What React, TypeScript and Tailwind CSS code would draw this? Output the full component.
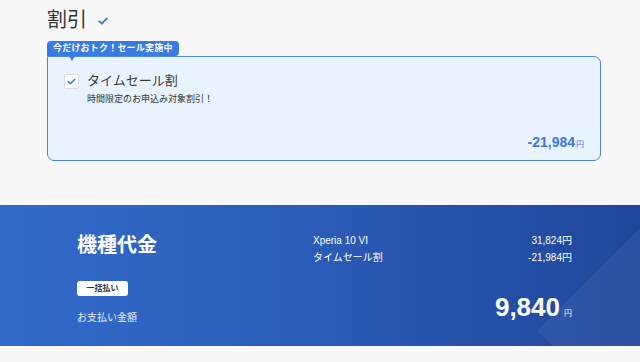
import React from "react";

const font = { fontFamily: '"Liberation Sans", "Noto Sans CJK JP", sans-serif' };

function Check({ className }: { className?: string }) {
  return (
    <svg viewBox="0 0 10 8" className={className} fill="none">
      <polyline points="1.2,4.2 3.8,6.6 8.8,1.4" stroke="currentColor" strokeWidth="1.8" strokeLinecap="round" strokeLinejoin="round" />
    </svg>
  );
}

export default function App() {
  return (
    <div className="w-[640px] h-[362px] bg-[#f8f8f8] overflow-hidden text-[#333]" style={font}>
      <div className="pl-[47px] pt-[6px]">
        <div className="flex items-center gap-[11px] h-[28px]">
          <span className="text-[20px] leading-[28px] text-[#333]">割引</span>
          <Check className="w-[10px] h-[8px] text-[#3b78dd] mt-[1px]" />
        </div>
        <div className="relative mt-[22px] w-[554px]">
          <div className="absolute left-0 -top-[15px] h-[15px] px-[6px] bg-[#3b7ae0] rounded-t-[4px] rounded-br-[4px] flex items-center">
            <span className="text-[9px] font-bold text-white leading-none tracking-[0.2px]">今だけおトク！セール実施中</span>
            <span className="absolute left-[22px] top-[15px] w-0 h-0 border-l-[3px] border-r-[3px] border-t-[5px] border-l-transparent border-r-transparent border-t-[#3b7ae0]" />
          </div>
          <div className="h-[105px] border-[1.5px] border-[#4a88ea] bg-[#e9f3fd] rounded-[7px] rounded-tl-none px-[16px] pt-[16px] flex flex-col">
            <div className="flex items-center gap-[8px]">
              <div className="w-[15px] h-[15px] bg-white border border-[#d5dbe3] rounded-[2px] flex items-center justify-center">
                <Check className="w-[9px] h-[7px] text-[#3b78dd]" />
              </div>
              <span className="text-[13px] leading-[16px] text-[#3a3a3a]">タイムセール割</span>
            </div>
            <div className="pl-[23px] mt-[4px] text-[9px] leading-[12px] text-[#333]">時間限定のお申込み対象割引！</div>
            <div className="mt-auto mb-[9px] flex items-baseline justify-end text-[#3b78dd]">
              <span className="text-[14px] font-bold leading-[18px]">-21,984</span>
              <span className="text-[8px] ml-[1px]">円</span>
            </div>
          </div>
        </div>
      </div>

      <div className="relative mt-[44px] h-[141px] bg-linear-to-r from-[#336bcb] via-[#2a5bb6] to-[#1f469a] text-white flex overflow-hidden">
        <svg className="absolute inset-0 w-full h-full" viewBox="0 0 640 141" preserveAspectRatio="none">
          <polygon points="537,126 640,23 640,141 553,141" fill="white" fillOpacity="0.06" />
        </svg>
        <div className="relative pl-[77px] w-[313px] pt-[26px] flex flex-col items-start">
          <div className="text-[20px] leading-[28px] font-bold">機種代金</div>
          <div className="mt-[22px] w-[51px] h-[15px] bg-white rounded-[3px] flex items-center justify-center text-[8px] text-[#333] font-bold">一括払い</div>
          <div className="mt-[15px] text-[10px] leading-[14px] text-[#e8eefa]">お支払い金額</div>
        </div>
        <div className="relative w-[259px] pt-[27px] text-[10px]">
          <div className="flex justify-between leading-[17px]">
            <span>Xperia 10 VI</span>
            <span>31,824円</span>
          </div>
          <div className="flex justify-between leading-[17px]">
            <span>タイムセール割</span>
            <span>-21,984円</span>
          </div>
          <div className="mt-[26px] flex items-baseline justify-end">
            <span className="text-[26px] leading-[30px] font-bold">9,840</span>
            <span className="text-[8px] ml-[4px]">円</span>
          </div>
        </div>
      </div>
    </div>
  );
}
